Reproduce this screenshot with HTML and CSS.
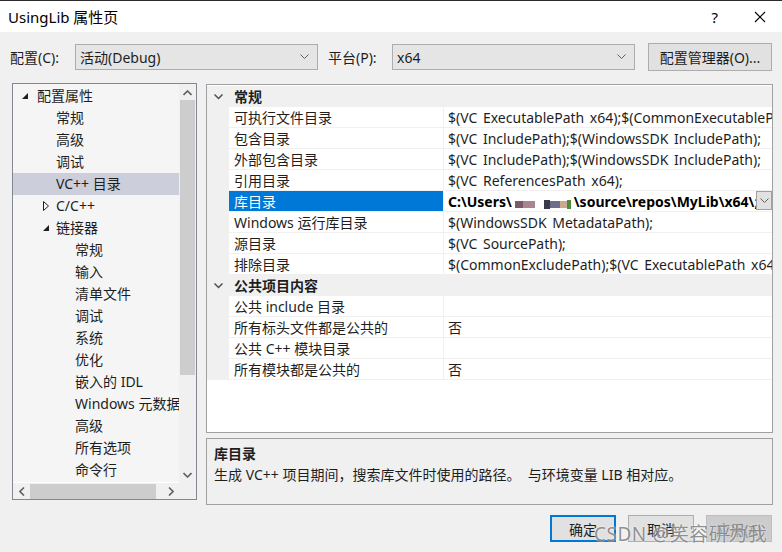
FILE: index.html
```html
<!DOCTYPE html>
<html lang="zh-CN">
<head>
    <meta charset="UTF-8">
    <title>UsingLib 属性页</title>
    <link rel="stylesheet" href="styles.css">
</head>
<body>
    <div class="dialog">
        <div class="titlebar">
            <div class="title">UsingLib 属性页</div>
            <div class="title-btns">
                <span class="help">?</span>
                <svg class="close" width="12" height="12" viewBox="0 0 12 12"><path d="M1 1 L11 11 M11 1 L1 11" stroke="#000" stroke-width="1.1" fill="none"/></svg>
            </div>
        </div>

        <div class="config-row">
            <span class="cfg-label">配置(C):</span>
            <div class="combo combo-cfg">
                <span>活动(Debug)</span>
                <svg width="9" height="6" viewBox="0 0 9 6"><path d="M0.5 0.5 L4.5 4.5 L8.5 0.5" stroke="#606060" fill="none"/></svg>
            </div>
            <span class="cfg-label plat">平台(P):</span>
            <div class="combo combo-plat">
                <span>x64</span>
                <svg width="9" height="6" viewBox="0 0 9 6"><path d="M0.5 0.5 L4.5 4.5 L8.5 0.5" stroke="#606060" fill="none"/></svg>
            </div>
            <button class="btn mgr-btn">配置管理器(O)...</button>
        </div>

        <div class="main">
            <div class="tree">
                <div class="tree-items">
                    <div class="node lvl0"><span class="twist"><svg width="6" height="6" viewBox="0 0 6 6"><path d="M6 0 L6 6 L0 6 Z" fill="#1e1e1e"/></svg></span>配置属性</div>
                    <div class="node lvl1">常规</div>
                    <div class="node lvl1">高级</div>
                    <div class="node lvl1">调试</div>
                    <div class="node lvl1 selected">VC++ 目录</div>
                    <div class="node lvl1"><span class="twist"><svg width="6" height="10" viewBox="0 0 6 10"><path d="M0.5 0.5 L5.5 5 L0.5 9.5 Z" fill="none" stroke="#1e1e1e"/></svg></span>C/C++</div>
                    <div class="node lvl1"><span class="twist"><svg width="6" height="6" viewBox="0 0 6 6"><path d="M6 0 L6 6 L0 6 Z" fill="#1e1e1e"/></svg></span>链接器</div>
                    <div class="node lvl2">常规</div>
                    <div class="node lvl2">输入</div>
                    <div class="node lvl2">清单文件</div>
                    <div class="node lvl2">调试</div>
                    <div class="node lvl2">系统</div>
                    <div class="node lvl2">优化</div>
                    <div class="node lvl2">嵌入的 IDL</div>
                    <div class="node lvl2">Windows 元数据</div>
                    <div class="node lvl2">高级</div>
                    <div class="node lvl2">所有选项</div>
                    <div class="node lvl2">命令行</div>
                </div>
                <div class="vscroll">
                    <div class="arrow"><svg width="9" height="6" viewBox="0 0 9 6"><path d="M0.5 5 L4.5 1 L8.5 5" stroke="#606060" stroke-width="1.6" fill="none"/></svg></div>
                    <div class="vtrack"><div class="vthumb"></div></div>
                    <div class="arrow"><svg width="9" height="6" viewBox="0 0 9 6"><path d="M0.5 1 L4.5 5 L8.5 1" stroke="#606060" stroke-width="1.6" fill="none"/></svg></div>
                </div>
                <div class="hscroll">
                    <div class="arrow"><svg width="6" height="9" viewBox="0 0 6 9"><path d="M5 0.5 L1 4.5 L5 8.5" stroke="#606060" stroke-width="1.6" fill="none"/></svg></div>
                    <div class="htrack"><div class="hthumb"></div></div>
                    <div class="arrow"><svg width="6" height="9" viewBox="0 0 6 9"><path d="M1 0.5 L5 4.5 L1 8.5" stroke="#606060" stroke-width="1.6" fill="none"/></svg></div>
                </div>
                <div class="corner"></div>
            </div>

            <div class="right">
                <div class="grid">
                    <div class="row category">
                        <div class="gutter"><svg width="9" height="6" viewBox="0 0 9 6"><path d="M0.5 0.5 L4.5 4.5 L8.5 0.5" stroke="#505050" stroke-width="1.5" fill="none"/></svg></div>
                        <div class="cat-name">常规</div>
                    </div>
                    <div class="row"><div class="gutter"></div><div class="name">可执行文件目录</div><div class="value">$(VC ExecutablePath x64);$(CommonExecutablePath)</div></div>
                    <div class="row"><div class="gutter"></div><div class="name">包含目录</div><div class="value">$(VC IncludePath);$(WindowsSDK IncludePath);</div></div>
                    <div class="row"><div class="gutter"></div><div class="name">外部包含目录</div><div class="value">$(VC IncludePath);$(WindowsSDK IncludePath);</div></div>
                    <div class="row"><div class="gutter"></div><div class="name">引用目录</div><div class="value">$(VC ReferencesPath x64);</div></div>
                    <div class="row active">
                        <div class="gutter"></div>
                        <div class="name">库目录</div>
                        <div class="value bold">
                            <span class="clip">C:\Users\<span class="blur"><i class="b1"></i><i class="b2"></i><i class="b3"></i><i class="b4"></i><i class="b5"></i><i class="b6"></i></span>\source\repos\MyLib\x64\;$(LibraryPath)</span>
                            <span class="drop"><svg width="9" height="6" viewBox="0 0 9 6"><path d="M0.5 0.5 L4.5 4.5 L8.5 0.5" stroke="#606060" fill="none"/></svg></span>
                        </div>
                    </div>
                    <div class="row"><div class="gutter"></div><div class="name">Windows 运行库目录</div><div class="value">$(WindowsSDK MetadataPath);</div></div>
                    <div class="row"><div class="gutter"></div><div class="name">源目录</div><div class="value">$(VC SourcePath);</div></div>
                    <div class="row"><div class="gutter"></div><div class="name">排除目录</div><div class="value">$(CommonExcludePath);$(VC ExecutablePath x64)</div></div>
                    <div class="row category">
                        <div class="gutter"><svg width="9" height="6" viewBox="0 0 9 6"><path d="M0.5 0.5 L4.5 4.5 L8.5 0.5" stroke="#505050" stroke-width="1.5" fill="none"/></svg></div>
                        <div class="cat-name">公共项目内容</div>
                    </div>
                    <div class="row"><div class="gutter"></div><div class="name">公共 include 目录</div><div class="value"></div></div>
                    <div class="row"><div class="gutter"></div><div class="name">所有标头文件都是公共的</div><div class="value">否</div></div>
                    <div class="row"><div class="gutter"></div><div class="name">公共 C++ 模块目录</div><div class="value"></div></div>
                    <div class="row"><div class="gutter"></div><div class="name">所有模块都是公共的</div><div class="value">否</div></div>
                </div>
                <div class="desc">
                    <div class="desc-title">库目录</div>
                    <div class="desc-text">生成 VC++ 项目期间，搜索库文件时使用的路径。&nbsp; 与环境变量 LIB 相对应。</div>
                </div>
            </div>
        </div>

        <div class="footer">
            <button class="btn ok">确定</button>
            <button class="btn">取消</button>
            <button class="btn disabled">应用(A)</button>
            <div class="watermark">CSDN @笑容研为我</div>
        </div>
    </div>
</body>
</html>
```

FILE: styles.css
```css
body {
    margin: 0;
    background: #f0f0f0;
    font-family: 'Noto Sans', 'Noto Sans CJK SC', sans-serif;
    font-size: 14px;
    color: #1e1e1e;
}

.dialog {
    width: 782px;
    height: 552px;
    overflow: hidden;
    position: relative;
}

.titlebar {
    height: 31px;
    background: #fff;
    border-top: 1px solid #2b2b2b;
    display: flex;
    align-items: center;
    justify-content: space-between;
    padding: 0 16px 0 8px;
}

.title {
    font-size: 15px;
    color: #000;
}

.title-btns {
    display: flex;
    align-items: center;
    gap: 36px;
}

.help {
    font-size: 15px;
    color: #000;
}

.config-row {
    display: flex;
    align-items: center;
    margin-top: 11px;
    padding-left: 10px;
    height: 28px;
}

.cfg-label {
    width: 65px;
}

.cfg-label.plat {
    width: 64px;
    margin-left: 10px;
}

.combo {
    height: 26px;
    box-sizing: border-box;
    border: 1px solid #adadad;
    background: #e5e5e5;
    display: flex;
    align-items: center;
    justify-content: space-between;
    padding: 0 8px 0 4px;
}

.combo-cfg {
    width: 243px;
}

.combo-plat {
    width: 243px;
}

.btn {
    font-family: inherit;
    font-size: 14px;
    color: #1e1e1e;
    background: #e1e1e1;
    border: 1px solid #adadad;
    padding: 0;
    height: 27px;
    box-sizing: border-box;
}

.mgr-btn {
    width: 124px;
    margin-left: 13px;
    height: 28px;
}

.main {
    display: flex;
    margin-top: 12px;
    padding-left: 12px;
    gap: 9px;
}

/* tree */
.tree {
    width: 185px;
    height: 417px;
    box-sizing: border-box;
    border: 1px solid #828790;
    display: grid;
    grid-template-columns: 1fr 17px;
    grid-template-rows: 1fr 16px;
    background: #f5f5f5;
}

.tree-items {
    overflow: hidden;
    background: #f5f5f5;
    border-bottom: 1px solid #fff;
    padding-top: 1px;
}

.node {
    height: 22px;
    line-height: 22px;
    white-space: nowrap;
    display: flex;
    align-items: center;
}

.node.lvl0 { padding-left: 24px; }
.node.lvl1 { padding-left: 43px; }
.node.lvl2 { padding-left: 62px; }

.node .twist {
    width: 19px;
    margin-left: -19px;
    display: flex;
    align-items: center;
    padding-left: 4px;
    box-sizing: border-box;
}

.node.lvl1 .twist {
    padding-left: 6px;
}

.node.selected {
    background: #cccedb;
}

.vscroll {
    background: #f0f0f0;
    display: flex;
    flex-direction: column;
}

.vscroll .arrow {
    height: 17px;
    display: flex;
    align-items: center;
    justify-content: center;
}

.vtrack {
    flex: 1;
}

.vthumb {
    margin: 0 1px;
    margin-top: -1px;
    height: 275px;
    background: #cdcdcd;
}

.hscroll {
    background: #f0f0f0;
    display: flex;
    align-items: center;
}

.hscroll .arrow {
    width: 17px;
    height: 16px;
    display: flex;
    align-items: center;
    justify-content: center;
}

.htrack {
    flex: 1;
    height: 15px;
}

.hthumb {
    width: 126px;
    height: 15px;
    background: #cdcdcd;
}

.corner {
    background: #f0f0f0;
}

/* property grid */
.right {
    display: flex;
    flex-direction: column;
    gap: 5px;
    margin-top: 1px;
}

.grid {
    width: 567px;
    height: 349px;
    box-sizing: border-box;
    border: 1px solid #a0a0a0;
    background: #fff;
    padding-top: 1px;
    overflow: hidden;
}

.row {
    display: flex;
    height: 21px;
    box-sizing: border-box;
    border-bottom: 1px solid #f0f0f0;
    line-height: 21px;
    white-space: nowrap;
}

.gutter {
    width: 22px;
    flex: none;
    background: #f0f0f0;
    display: flex;
    align-items: center;
    justify-content: center;
}

.name {
    width: 214px;
    flex: none;
    padding-left: 5px;
    box-sizing: border-box;
    overflow: hidden;
}

.value {
    flex: 1;
    border-left: 1px solid #f0f0f0;
    padding-left: 4px;
    overflow: hidden;
    display: flex;
    min-width: 0;
    word-spacing: 2px;
}

.category {
    background: #f0f0f0;
    border-bottom: none;
}

.cat-name {
    font-weight: bold;
    padding-left: 5px;
}

.active .name {
    background: #0078d7;
    color: #fff;
}

.value.bold {
    font-weight: bold;
    color: #000;
    padding-right: 0;
    word-spacing: 0;
}

.clip {
    flex: 1;
    overflow: hidden;
    min-width: 0;
}

.blur {
    display: inline-flex;
    align-items: center;
    height: 10px;
    margin: 0 3px;
    vertical-align: -1px;
}

.blur i {
    display: inline-block;
    height: 7px;
}

.blur .b1 { width: 8px; background: #7a5a6a; }
.blur .b2 { width: 12px; background: #a9868e; margin-right: 9px; }
.blur .b3 { width: 6px; background: #3a3a4a; height: 9px; }
.blur .b4 { width: 10px; background: #6d6e8c; }
.blur .b5 { width: 7px; background: #caa98f; }
.blur .b6 { width: 4px; background: #4d8a3c; height: 9px; }

.drop {
    width: 16px;
    flex: none;
    height: 19px;
    box-sizing: border-box;
    border: 1px solid #a0a0a0;
    background: #e1e1e1;
    display: flex;
    align-items: center;
    justify-content: center;
}

.desc {
    width: 567px;
    height: 67px;
    box-sizing: border-box;
    border: 1px solid #a0a0a0;
    padding: 4px 7px;
    line-height: 21px;
}

.desc-title {
    font-weight: bold;
}

/* buttons */
.footer {
    display: flex;
    justify-content: flex-end;
    gap: 12px;
    padding-right: 10px;
    margin-top: 10px;
    position: relative;
}

.footer .btn {
    width: 66px;
}

.btn.ok {
    border: 2px solid #0078d7;
}

.btn.disabled {
    background: #cccccc;
    border-color: #bfbfbf;
    color: #838383;
}

.watermark {
    position: absolute;
    left: 594px;
    top: 4px;
    font-size: 19px;
    color: rgba(110, 110, 110, 0.75);
    text-shadow: 0 0 2px #fff;
    white-space: nowrap;
    letter-spacing: 0.5px;
}
```
